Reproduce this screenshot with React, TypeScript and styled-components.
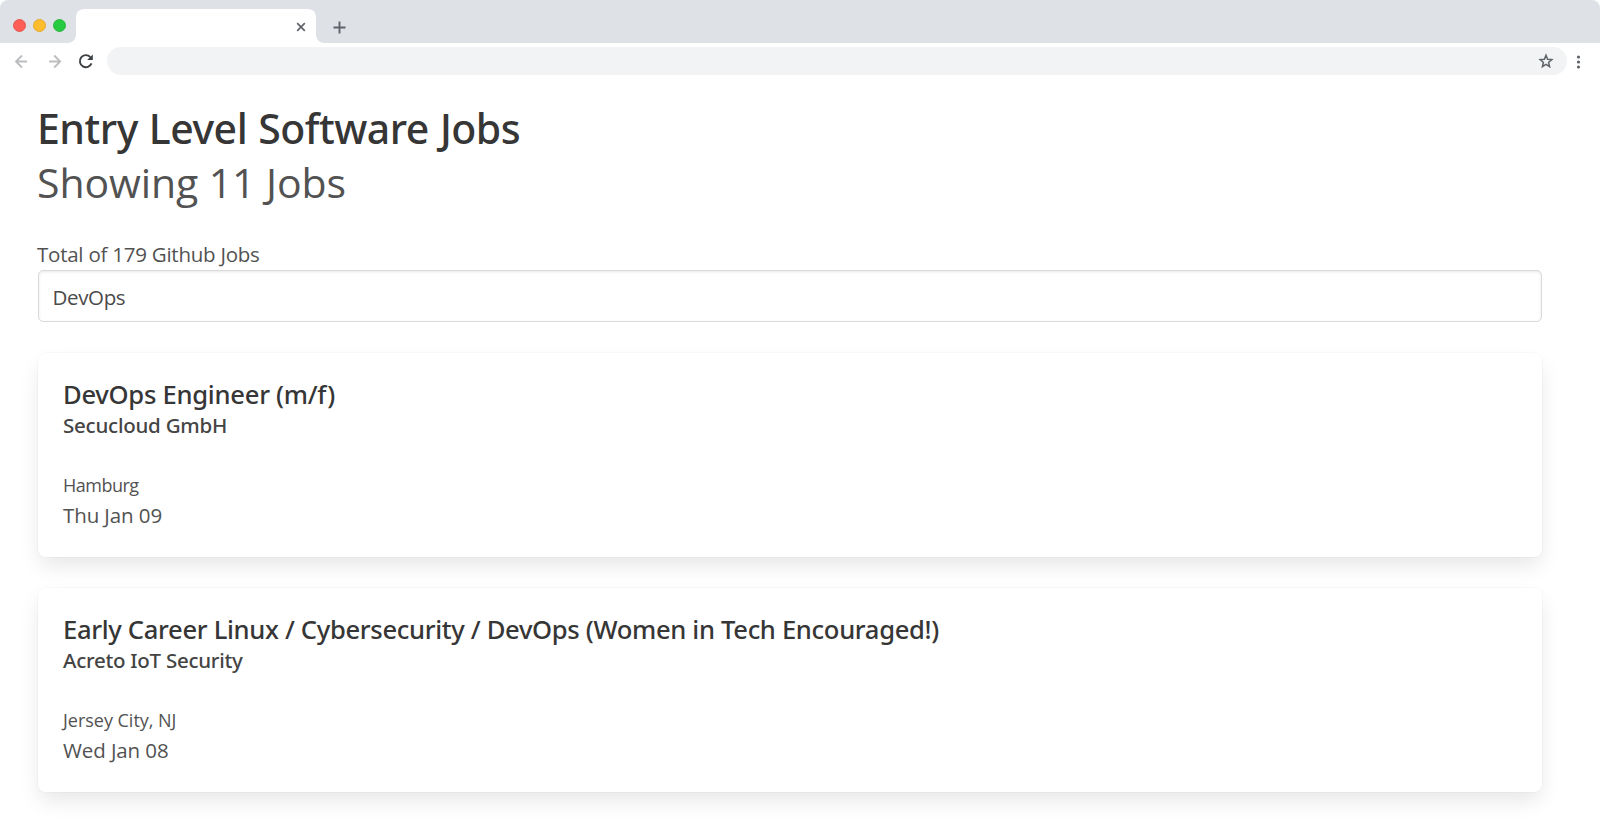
import React from 'react';
import styled, { createGlobalStyle } from 'styled-components';

const GlobalStyle = createGlobalStyle`
  * { box-sizing: border-box; }
  body {
    margin: 0;
    background: #fff;
    font-family: 'Open Sans', 'Noto Sans', sans-serif;
    color: #525252;
  }
  h1, h2, h3, p { margin: 0; }
`;

const Window = styled.div`
  height: 819px;
  overflow: hidden;
  display: flex;
  flex-direction: column;
  background: #fff;
`;

const TabStrip = styled.header`
  flex: none;
  display: flex;
  align-items: flex-end;
  height: 43px;
  background: #dee1e6;
  border-radius: 8px 8px 0 0;
`;

const WindowControls = styled.div`
  display: flex;
  gap: 7px;
  width: 76px;
  height: 34px;
  padding: 10px 0 0 13px;
`;

const ControlDot = styled.span<{ $fill: string; $edge: string }>`
  width: 13px;
  height: 13px;
  border-radius: 50%;
  background: ${(p) => p.$fill};
  border: 1px solid ${(p) => p.$edge};
`;

const Tab = styled.div`
  position: relative;
  display: flex;
  align-items: center;
  justify-content: flex-end;
  width: 240px;
  height: 34px;
  padding: 2px 10px 0 0;
  background: #fff;
  border-radius: 8px 8px 0 0;

  &::before,
  &::after {
    content: '';
    position: absolute;
    bottom: 0;
    width: 8px;
    height: 8px;
  }
  &::before {
    right: 100%;
    background: radial-gradient(circle at 0 0, transparent 7.5px, #fff 8.2px);
  }
  &::after {
    left: 100%;
    background: radial-gradient(circle at 100% 0, transparent 7.5px, #fff 8.2px);
  }
`;

const NewTab = styled.div`
  display: flex;
  align-items: center;
  height: 34px;
  padding: 3px 0 0 17px;
`;

const Toolbar = styled.nav`
  flex: none;
  display: flex;
  align-items: center;
  height: 36px;
`;

const NavIcons = styled.div`
  display: flex;
  align-items: center;
  width: 107px;
  padding: 1px 0 0 13px;
`;

const Icon = styled.svg<{ $gap?: number }>`
  display: block;
  flex: none;
  margin-right: ${(p) => p.$gap ?? 0}px;
`;

const AddressBar = styled.div`
  flex: 1;
  display: flex;
  align-items: center;
  justify-content: flex-end;
  height: 28px;
  padding-right: 13px;
  border-radius: 14px;
  background: #f1f3f4;
`;

const MenuSlot = styled.div`
  display: flex;
  width: 33px;
  padding: 1px 0 0 9px;
`;

const Page = styled.main`
  padding: 24px 58px 0 37.5px;
`;

const Title = styled.h1`
  font: 500 41px/51px 'Noto Sans', sans-serif;
  letter-spacing: -0.48px;
  word-spacing: 0.8px;
  color: #363636;
  margin-left: -0.5px;
`;

const Subtitle = styled.h2`
  font-size: 41px;
  font-weight: 400;
  line-height: 51px;
  letter-spacing: -0.09px;
  margin: 3px 0 31px -0.5px;
`;

const Total = styled.p`
  font-size: 20.5px;
  line-height: 31px;
  letter-spacing: -0.24px;
  margin-left: -0.5px;
`;

const SearchInput = styled.input`
  display: block;
  width: 1504px;
  height: 52px;
  padding: 2px 14px 0;
  border: 1px solid #dbdbdb;
  border-radius: 5px;
  outline: none;
  background: #fff;
  box-shadow: inset 0 1px 3px rgba(10, 10, 10, 0.1);
  color: #4a4a4a;
  font-family: inherit;
  font-size: 20.5px;
  letter-spacing: -0.35px;
`;

const JobList = styled.section`
  display: flex;
  flex-direction: column;
  gap: 31px;
  margin-top: 31px;
`;

const JobCard = styled.article`
  width: 1504px;
  height: 204px;
  padding: 26px 25.5px;
  border-radius: 8px;
  background: #fff;
  box-shadow: 0 10.4px 21px -2.6px rgba(10, 10, 10, 0.1), 0 0 0 1px rgba(10, 10, 10, 0.02);
`;

const JobTitle = styled.h3<{ $track: number }>`
  font: 500 25.6px/31px 'Noto Sans', sans-serif;
  letter-spacing: ${(p) => p.$track}px;
  color: #363636;
`;

const Company = styled.p<{ $track: number }>`
  font: 500 20.5px/31px 'Noto Sans', sans-serif;
  letter-spacing: ${(p) => p.$track}px;
  color: #444;
`;

const Location = styled.p<{ $track: number }>`
  margin-top: 29px;
  font-size: 18px;
  line-height: 31px;
  letter-spacing: ${(p) => p.$track}px;
`;

const Posted = styled.p`
  font-size: 20.5px;
  line-height: 28px;
  letter-spacing: -0.1px;
`;

const jobs = [
  {
    title: 'DevOps Engineer (m/f)',
    company: 'Secucloud GmbH',
    location: 'Hamburg',
    posted: 'Thu Jan 09',
    tracking: [-0.27, -0.23, -0.5],
  },
  {
    title: 'Early Career Linux / Cybersecurity / DevOps (Women in Tech Encouraged!)',
    company: 'Acreto IoT Security',
    location: 'Jersey City, NJ',
    posted: 'Wed Jan 08',
    tracking: [-0.325, -0.27, -0.02],
  },
];

export default function App() {
  return (
    <Window>
      <GlobalStyle />
      <TabStrip>
        <WindowControls>
          <ControlDot $fill="#ff5f57" $edge="#e9574f" />
          <ControlDot $fill="#ffbd2e" $edge="#e3a82b" />
          <ControlDot $fill="#28ca41" $edge="#2bb83f" />
        </WindowControls>
        <Tab>
          <Icon width="10" height="10" viewBox="0 0 10 10" fill="none" stroke="#5f6368" strokeWidth="1.7">
            <path d="M1.2 1.2 8.8 8.8M8.8 1.2 1.2 8.8" />
          </Icon>
        </Tab>
        <NewTab>
          <Icon width="13" height="13" viewBox="0 0 13 13" fill="none" stroke="#5f6368" strokeWidth="1.9">
            <path d="M6.5 .5v12M.5 6.5h12" />
          </Icon>
        </NewTab>
      </TabStrip>
      <Toolbar>
        <NavIcons>
          <Icon $gap={20} width="16" height="16" viewBox="0 0 16 16" fill="none" stroke="#bbbdbf" strokeWidth="1.8">
            <path d="M14 7.5H3M9 1.5l-6 6 6 6" />
          </Icon>
          <Icon $gap={13} width="16" height="16" viewBox="0 0 16 16" fill="none" stroke="#bbbdbf" strokeWidth="1.8">
            <path d="M0.2 7.5h11M5.2 1.5l6 6-6 6" />
          </Icon>
          <Icon width="16" height="16" viewBox="0 0 16 16" fill="none">
            <path d="M12.3 3.1A6 6 0 1 0 13.5 9.3" stroke="#3c4043" strokeWidth="1.9" />
            <path d="M14.8 .5v5.6H9.2z" fill="#3c4043" />
          </Icon>
        </NavIcons>
        <AddressBar>
          <Icon width="16" height="16" viewBox="0 0 16 16" fill="none" stroke="#5f6368" strokeWidth="1.5">
            <path d="M8 2.2 9.6 6.3l4.2.3-3.2 2.8 1 4.2L8 11.4l-3.6 2.2 1-4.2-3.2-2.8 4.2-.3z" />
          </Icon>
        </AddressBar>
        <MenuSlot>
          <Icon width="5" height="14" viewBox="0 0 5 14" fill="#5f6368">
            <circle cx="2.5" cy="2" r="1.6" />
            <circle cx="2.5" cy="7" r="1.6" />
            <circle cx="2.5" cy="12" r="1.6" />
          </Icon>
        </MenuSlot>
      </Toolbar>
      <Page>
        <Title>Entry Level Software Jobs</Title>
        <Subtitle>Showing 11 Jobs</Subtitle>
        <Total>Total of 179 Github Jobs</Total>
        <SearchInput type="text" defaultValue="DevOps" />
        <JobList>
          {jobs.map((job) => (
            <JobCard key={job.title}>
              <JobTitle $track={job.tracking[0]}>{job.title}</JobTitle>
              <Company $track={job.tracking[1]}>{job.company}</Company>
              <Location $track={job.tracking[2]}>{job.location}</Location>
              <Posted>{job.posted}</Posted>
            </JobCard>
          ))}
        </JobList>
      </Page>
    </Window>
  );
}
